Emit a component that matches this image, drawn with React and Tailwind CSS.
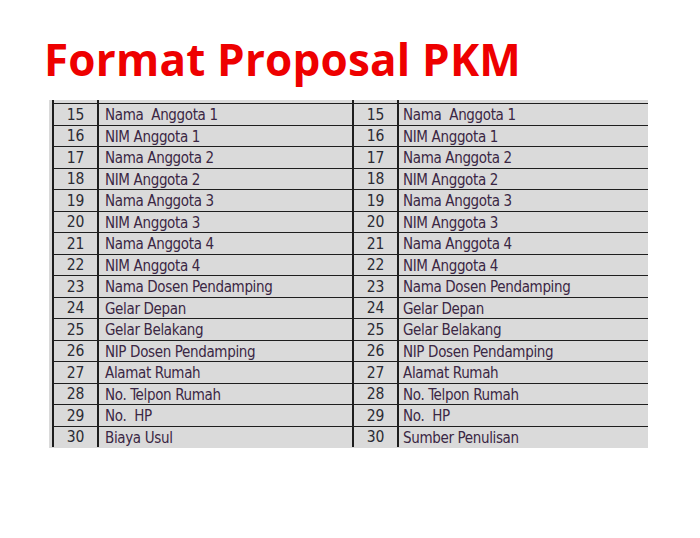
import React from 'react';

const left = [
  ['15', 'Nama  Anggota 1'],
  ['16', 'NIM Anggota 1'],
  ['17', 'Nama Anggota 2'],
  ['18', 'NIM Anggota 2'],
  ['19', 'Nama Anggota 3'],
  ['20', 'NIM Anggota 3'],
  ['21', 'Nama Anggota 4'],
  ['22', 'NIM Anggota 4'],
  ['23', 'Nama Dosen Pendamping'],
  ['24', 'Gelar Depan'],
  ['25', 'Gelar Belakang'],
  ['26', 'NIP Dosen Pendamping'],
  ['27', 'Alamat Rumah'],
  ['28', 'No. Telpon Rumah'],
  ['29', 'No.  HP'],
  ['30', 'Biaya Usul'],
];

const rightLast = 'Sumber Penulisan';

const Row = ({ n, a, b }) => (
  <div className="flex h-[21.5px]">
    <div className="w-[3px] shrink-0" />
    <div className="w-[45px] shrink-0 border-l-2 border-t-[1.5px] border-[#1e1e1e] flex items-center justify-center pt-[2px] text-[15.5px] text-[#2b2b33]">
      {n}
    </div>
    <div className="w-[255px] shrink-0 border-l-2 border-t-[1.5px] border-[#1e1e1e] flex items-center pl-[6px] pt-[2px] whitespace-pre tracking-[-0.35px] text-[#3a2744]">
      {a}
    </div>
    <div className="w-[45px] shrink-0 border-l-2 border-t-[1.5px] border-[#1e1e1e] flex items-center justify-center pt-[2px] text-[15.5px] text-[#2b2b33]">
      {n}
    </div>
    <div className="flex-1 border-l-2 border-t-[1.5px] border-[#1e1e1e] flex items-center pl-[4px] pt-[2px] whitespace-pre tracking-[-0.35px] text-[#3a2744]">
      {b}
    </div>
  </div>
);

export default function App() {
  return (
    <div className="w-[700px] h-[538px] bg-white overflow-hidden">
      <h1
        className="pt-[37px] pl-[44px] h-[80px] text-[44px] leading-none font-bold tracking-[0.2px] text-[#ee0000]"
        style={{ fontFamily: '"Open Sans", sans-serif' }}
      >
        Format Proposal PKM
      </h1>
      <div
        className="mt-[20px] ml-[49px] w-[599px] h-[348px] overflow-hidden bg-[#dadada] text-[15px]"
        style={{ fontFamily: '"DejaVu Sans Condensed", "DejaVu Sans", sans-serif' }}
      >
        <div className="flex h-[3px]">
          <div className="w-[3px] shrink-0" />
          <div className="w-[45px] shrink-0 border-l-2 border-[#1e1e1e]" />
          <div className="w-[255px] shrink-0 border-l-2 border-[#1e1e1e]" />
          <div className="w-[45px] shrink-0 border-l-2 border-[#1e1e1e]" />
          <div className="flex-1 border-l-2 border-[#1e1e1e]" />
        </div>
        {left.map(([n, a], i) => (
          <Row key={n} n={n} a={a} b={i === left.length - 1 ? rightLast : a} />
        ))}
      </div>
    </div>
  );
}
